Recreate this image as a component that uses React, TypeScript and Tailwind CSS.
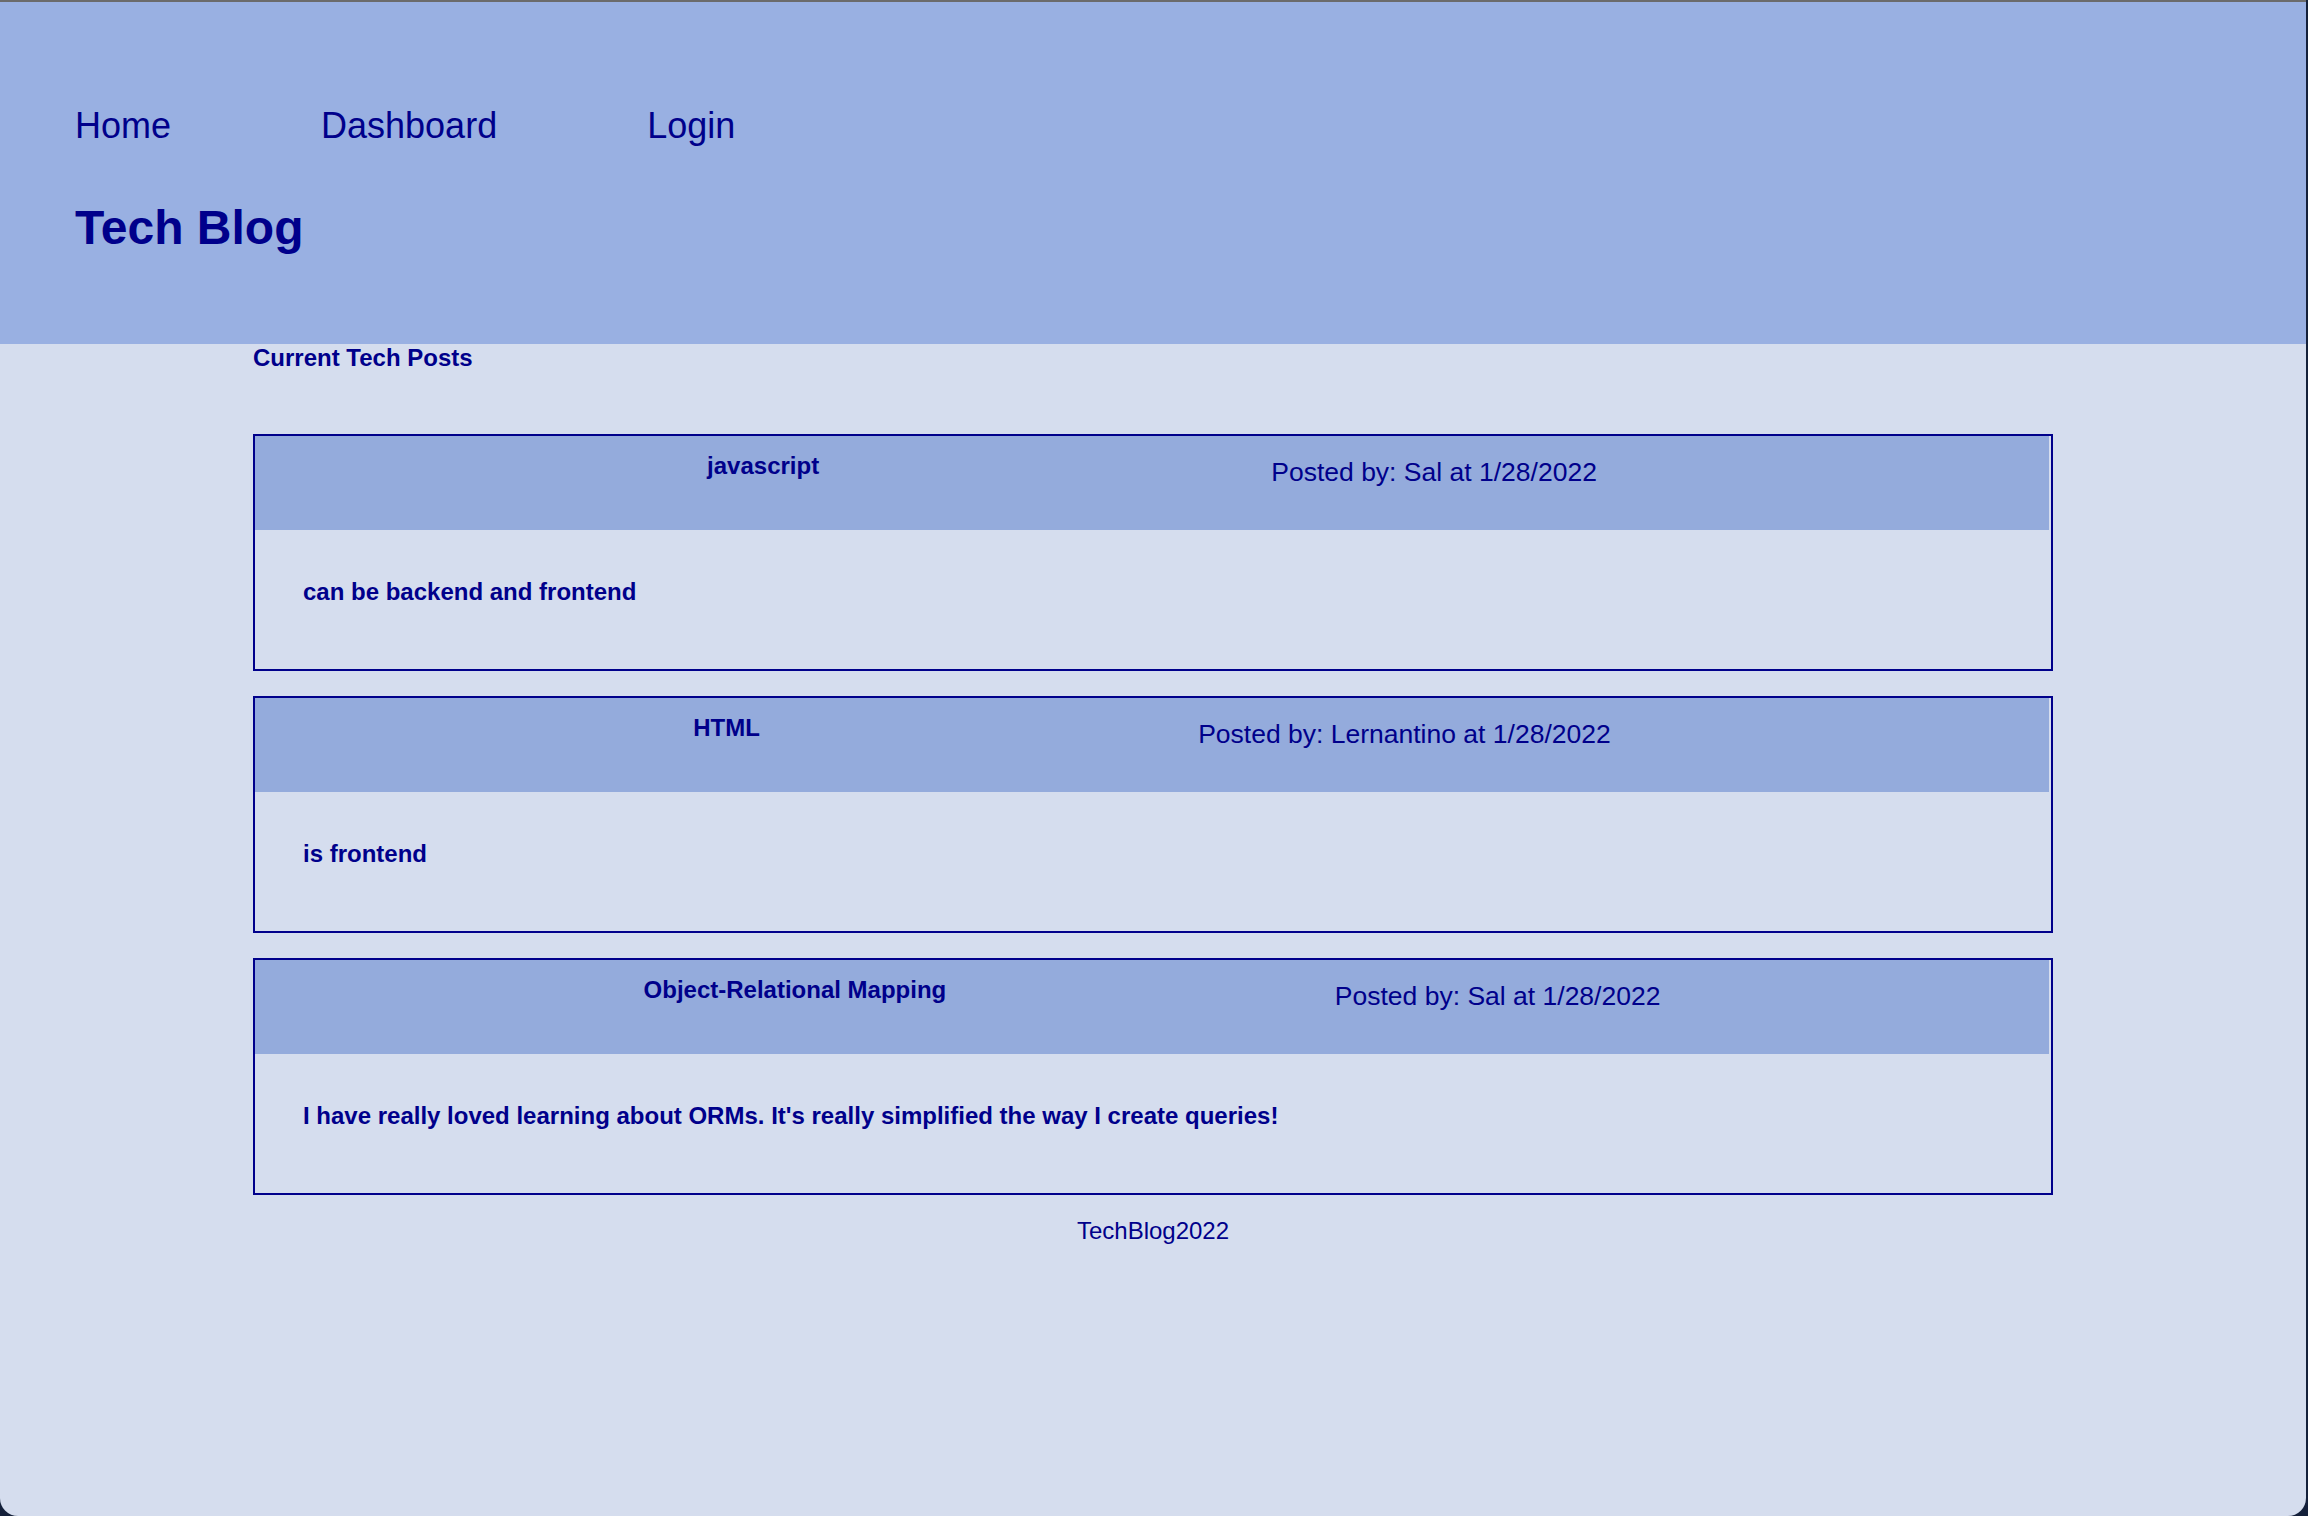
import React from "react";

const posts = [
  {
    title: "javascript",
    author: "Sal",
    date: "1/28/2022",
    body: "can be backend and frontend",
  },
  {
    title: "HTML",
    author: "Lernantino",
    date: "1/28/2022",
    body: "is frontend",
  },
  {
    title: "Object-Relational Mapping",
    author: "Sal",
    date: "1/28/2022",
    body: "I have really loved learning about ORMs. It's really simplified the way I create queries!",
  },
];

const App: React.FC = () => {
  return (
    <div className="w-[2308px] h-[1516px] bg-[#14203a] overflow-hidden">
      <div
        className="w-[2306px] h-[1516px] bg-[#d5ddee] border-t-2 border-[#6b6b6b] rounded-b-[18px] overflow-hidden text-[#00008b]"
        style={{ fontFamily: '"Liberation Sans", Arial, Helvetica, sans-serif' }}
      >
        <header className="h-[342px] bg-[#99b0e2] pl-[75px] pt-[103px]">
          <nav className="flex gap-[150px] text-[36px] leading-[41px]">
            <a>Home</a>
            <a>Dashboard</a>
            <a>Login</a>
          </nav>
          <h1 className="mt-[54px] text-[48px] leading-[55px] font-bold">Tech Blog</h1>
        </header>

        <main className="w-[1800px] mx-auto">
          <h2 className="text-[24px] leading-[28px] font-bold">Current Tech Posts</h2>

          <div className="mt-[62px] flex flex-col gap-[25px]">
            {posts.map((post, index) => (
              <div key={index} className="border-2 border-[#00008b]">
                <div className="h-[94px] mr-[2px] bg-[#94abdc] flex justify-evenly items-start">
                  <h3 className="pt-[16px] text-[24px] leading-[28px] font-bold">{post.title}</h3>
                  <p className="pt-[21px] text-[26.5px] leading-[30px]">
                    Posted by: {post.author} at {post.date}
                  </p>
                </div>
                <div className="h-[139px] pl-[48px] pt-[48px]">
                  <p className="text-[24px] leading-[28px] font-bold">{post.body}</p>
                </div>
              </div>
            ))}
          </div>

          <footer className="mt-[22px] text-center text-[24px] leading-[28px]">TechBlog2022</footer>
        </main>
      </div>
    </div>
  );
};

export default App;
